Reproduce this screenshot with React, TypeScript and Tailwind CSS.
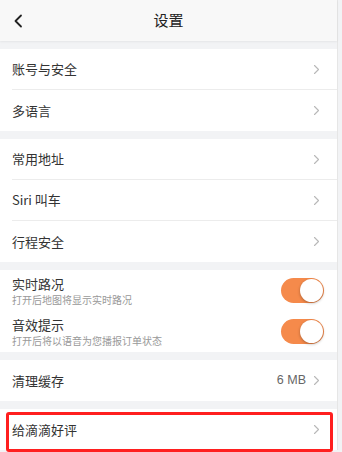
const font = "font-['PingFang_SC','Noto_Sans_CJK_SC',sans-serif]";

function Chevron() {
  return (
    <svg width="7" height="11" viewBox="0 0 7 11" fill="none" aria-hidden="true">
      <path d="M1.5 1.5L5.5 5.5L1.5 9.5" stroke="#b8b8b8" strokeWidth="1.1" strokeLinecap="round" strokeLinejoin="round" />
    </svg>
  );
}

function Row({ label, value, last }: { label: string; value?: string; last?: boolean }) {
  return (
    <div className="h-[41px] pl-3 flex items-center">
      <div className={`flex-1 h-full flex items-center justify-between pr-[17px] ${last ? "" : "border-b border-[#ececec]"}`}>
        <span className="text-[13px] text-[#333]">{label}</span>
        <div className="flex items-center gap-[7px]">
          {value && <span className="text-[12.5px] text-[#666] font-['Liberation_Sans',sans-serif]">{value}</span>}
          <Chevron />
        </div>
      </div>
    </div>
  );
}

function Toggle() {
  return (
    <div className="w-[43px] h-[25px] rounded-full bg-[#f58a4b] relative shrink-0">
      <div className="absolute right-[1px] top-[1px] w-[23px] h-[23px] rounded-full bg-white shadow-[0_1px_3px_rgba(0,0,0,0.3)]" />
    </div>
  );
}

function ToggleRow({ label, hint }: { label: string; hint: string }) {
  return (
    <div className="h-[41px] pl-3 pr-[13px] flex items-center justify-between">
      <div className="flex flex-col">
        <span className="text-[13px] leading-[16px] text-[#333]">{label}</span>
        <span className="text-[10px] leading-[13px] text-[#999] mt-[1px]">{hint}</span>
      </div>
      <Toggle />
    </div>
  );
}

function Gap() {
  return <div className="h-[8px]" />;
}

export default function App() {
  return (
    <div className={`w-[342px] h-[452px] overflow-hidden bg-[#f2f3f5] ${font}`}>
      <div className="w-[338px] border-r border-[#e6e6e6]">
        {/* header */}
        <header className="h-[41px] bg-[#f8f8f8] relative flex items-center justify-center shadow-[0_1px_2px_rgba(0,0,0,0.06)]">
          <svg className="absolute left-[13px] top-[14px]" width="11" height="14" viewBox="0 0 11 14" fill="none">
            <path d="M8 1.5L2.5 7L8 12.5" stroke="#222" strokeWidth="1.8" strokeLinecap="round" strokeLinejoin="round" />
          </svg>
          <span className="text-[15px] text-[#222]">设置</span>
        </header>
        <Gap />
        <div className="bg-white">
          <Row label="账号与安全" />
          <Row label="多语言" last />
        </div>
        <Gap />
        <div className="bg-white">
          <Row label="常用地址" />
          <Row label="Siri 叫车" />
          <Row label="行程安全" last />
        </div>
        <Gap />
        <div className="bg-white">
          <ToggleRow label="实时路况" hint="打开后地图将显示实时路况" />
          <ToggleRow label="音效提示" hint="打开后将以语音为您播报订单状态" />
        </div>
        <Gap />
        <div className="bg-white">
          <Row label="清理缓存" value="6 MB" last />
        </div>
        <Gap />
        <div className="bg-white relative">
          <Row label="给滴滴好评" last />
          <div className="absolute left-[6px] right-[4px] top-[3px] bottom-[-2px] border-[3px] border-[#ff1f1f] rounded-[3px]" />
        </div>
      </div>
    </div>
  );
}
